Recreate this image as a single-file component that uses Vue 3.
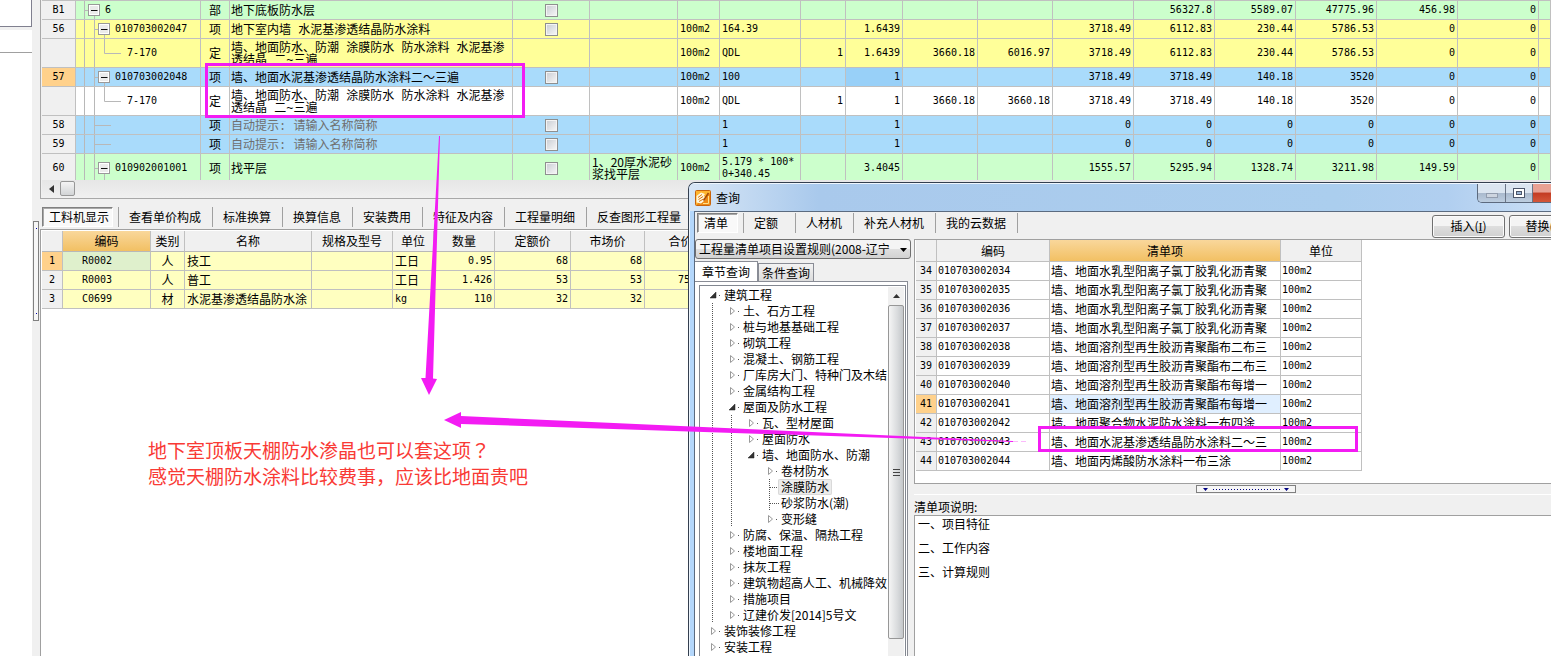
<script setup>
import { ref } from 'vue'

const cols = [34, 125, 29, 283, 77, 88, 42, 81, 45, 57, 75, 75, 81, 81, 81, 81, 81, 81]

const longName = '墙、地面防水、防潮 涂膜防水 防水涂料 水泥基渗透结晶 二~三遍'
const rows = [
  { no: 'B1', tone: 'green', kind: 'root', h: 18, code: '6', type: '部', name: '地下底板防水层', check: true, nums: ['', '', '', '', '', '56327.8', '5589.07', '47775.96', '456.98', '0'] },
  { no: '56', tone: 'yellow', kind: 'branch', h: 18, code: '010703002047', type: '项', name: '地下室内墙 水泥基渗透结晶防水涂料', check: true, unit: '100m2', expr: '164.39', nums: ['', '1.6439', '', '', '3718.49', '6112.83', '230.44', '5786.53', '0', '0'] },
  { no: '', tone: 'yellow', kind: 'leaf', h: 28, code: '7-170', type: '定', name: longName, unit: '100m2', expr: 'QDL', nums: ['1', '1.6439', '3660.18', '6016.97', '3718.49', '6112.83', '230.44', '5786.53', '0', '0'] },
  { no: '57', tone: 'blue', kind: 'branch', h: 18, current: true, code: '010703002048', type: '项', name: '墙、地面水泥基渗透结晶防水涂料二～三遍', check: true, unit: '100m2', expr: '100', nums: ['', '1', '', '', '3718.49', '3718.49', '140.18', '3520', '0', '0'] },
  { no: '', tone: 'white', kind: 'leaf', h: 28, code: '7-170', type: '定', name: longName, unit: '100m2', expr: 'QDL', nums: ['1', '1', '3660.18', '3660.18', '3718.49', '3718.49', '140.18', '3520', '0', '0'] },
  { no: '58', tone: 'blue', kind: 'hint', h: 18, code: '', type: '项', name: '自动提示: 请输入名称简称', check: true, expr: '1', nums: ['', '1', '', '', '0', '0', '0', '0', '0', '0'] },
  { no: '59', tone: 'blue', kind: 'hint', h: 18, code: '', type: '项', name: '自动提示: 请输入名称简称', check: true, expr: '1', nums: ['', '1', '', '', '0', '0', '0', '0', '0', '0'] },
  { no: '60', tone: 'green', kind: 'branch', h: 28, code: '010902001001', type: '项', name: '找平层', check: true, feature: '1、20厚水泥砂浆找平层', unit: '100m2', expr: '5.179 * 100*0+340.45', nums: ['', '3.4045', '', '', '1555.57', '5295.94', '1328.74', '3211.98', '149.59', '0'] }
]
const gutter = { root: 24, branch: 34, leaf: 46, hint: 36 }

const detailTabs = ['查看单价构成', '标准换算', '换算信息', '安装费用', '特征及内容', '工程量明细', '反查图形工程量']
const detailCols = [21, 88, 34, 127, 81, 41, 61, 76, 74, 72]
const detailHeads = ['编码', '类别', '名称', '规格及型号', '单位', '数量', '定额价', '市场价', '合价']
const detail = [
  ['R0002', '人', '技工', '工日', '0.95', '68', '68', '64.6'],
  ['R0003', '人', '普工', '工日', '1.426', '53', '53', '75.578'],
  ['C0699', '材', '水泥基渗透结晶防水涂', 'kg', '110', '32', '32', '3520']
]

const queryTabs = ['定额', '人材机', '补充人材机', '我的云数据']
const rule = ref('2008')

// d: depth, s: o(pen) / c(losed) / l(eaf)
const tree = [
  { t: '建筑工程', d: 0, s: 'o' },
  { t: '土、石方工程', d: 1, s: 'c' },
  { t: '桩与地基基础工程', d: 1, s: 'c' },
  { t: '砌筑工程', d: 1, s: 'c' },
  { t: '混凝土、钢筋工程', d: 1, s: 'c' },
  { t: '厂库房大门、特种门及木结', d: 1, s: 'c' },
  { t: '金属结构工程', d: 1, s: 'c' },
  { t: '屋面及防水工程', d: 1, s: 'o' },
  { t: '瓦、型材屋面', d: 2, s: 'c' },
  { t: '屋面防水', d: 2, s: 'c' },
  { t: '墙、地面防水、防潮', d: 2, s: 'o' },
  { t: '卷材防水', d: 3, s: 'c' },
  { t: '涂膜防水', d: 3, s: 'l', on: true },
  { t: '砂浆防水(潮)', d: 3, s: 'l' },
  { t: '变形缝', d: 3, s: 'c' },
  { t: '防腐、保温、隔热工程', d: 1, s: 'c' },
  { t: '楼地面工程', d: 1, s: 'c' },
  { t: '抹灰工程', d: 1, s: 'c' },
  { t: '建筑物超高人工、机械降效', d: 1, s: 'c' },
  { t: '措施项目', d: 1, s: 'c' },
  { t: '辽建价发[2014]5号文', d: 1, s: 'c' },
  { t: '装饰装修工程', d: 0, s: 'c' },
  { t: '安装工程', d: 0, s: 'c' }
]

const listNames = [
  '墙、地面水乳型阳离子氯丁胶乳化沥青聚',
  '墙、地面水乳型阳离子氯丁胶乳化沥青聚',
  '墙、地面水乳型阳离子氯丁胶乳化沥青聚',
  '墙、地面水乳型阳离子氯丁胶乳化沥青聚',
  '墙、地面溶剂型再生胶沥青聚酯布二布三',
  '墙、地面溶剂型再生胶沥青聚酯布二布三',
  '墙、地面溶剂型再生胶沥青聚酯布每增一',
  '墙、地面溶剂型再生胶沥青聚酯布每增一',
  '墙、地面聚合物水泥防水涂料一布四涂',
  '墙、地面水泥基渗透结晶防水涂料二～三',
  '墙、地面丙烯酸防水涂料一布三涂'
]
const list = listNames.map((name, i) => ({ no: 34 + i, code: '0107030020' + (34 + i), name }))
</script>

<template>
  <div class="app">
    <aside class="side">
      <div class="side-box"></div>
      <div class="side-gap"></div>
      <div class="side-head"></div>
      <div class="side-body"></div>
    </aside>
    <div class="split-col"><div class="v-grip"><i></i><i></i></div></div>

    <main class="main">
      <section class="upper">
        <div class="grid-clip">
          <table class="grid budget">
            <colgroup>
              <col v-for="(w, i) in cols" :key="i" :style="{ width: w + 'px' }" />
              <col />
            </colgroup>
            <tbody>
              <tr v-for="(r, i) in rows" :key="i" :class="[r.tone, { tall: r.h > 18 }]">
                <th scope="row" class="num" :class="{ current: r.current }">{{ r.no }}</th>
                <td>
                  <div class="node">
                    <svg :width="gutter[r.kind]" :height="r.h" fill="none" stroke="#b8b8b8">
                      <path :d="`M8.5 0V${r.h}`" />
                      <path v-if="r.kind !== 'root'" :d="`M18.5 0V${r.h}`" />
                      <path v-if="r.kind === 'leaf'" :d="`M28.5 0V${r.h / 2 + 0.5}H45`" />
                      <path v-if="r.kind === 'hint'" :d="`M18 ${r.h / 2 + 0.5}H35`" />
                      <g v-if="r.kind === 'root' || r.kind === 'branch'" :transform="`translate(${r.kind === 'root' ? 12 : 22} ${r.h / 2 - 6})`">
                        <path :d="`M-4 6.5H0M6.5 12V${r.h}`" />
                        <rect x=".5" y=".5" width="11" height="11" fill="#fff" stroke="#999" />
                        <rect x="2" y="2" width="8" height="8" fill="#ebebeb" stroke="none" />
                        <path d="M3 6.5H9.500" stroke="#111" />
                      </g>
                    </svg>
                    <span class="num">{{ r.code }}</span>
                  </div>
                </td>
                <td class="mid">{{ r.type }}</td>
                <td class="name" :class="{ hint: r.kind === 'hint' }">{{ r.name }}</td>
                <td class="mid"><input v-if="r.check" type="checkbox" class="tick" :aria-label="'选择 ' + r.no" /></td>
                <td class="feature">{{ r.feature }}</td>
                <td class="num">{{ r.unit }}</td>
                <td class="num expr">{{ r.expr }}</td>
                <td v-for="(n, k) in r.nums" :key="k" class="num right" :class="{ picked: r.current && k === 1 }">{{ n }}</td>
                <td></td>
              </tr>
            </tbody>
          </table>
        </div>
        <div class="h-scroll">
          <button type="button" class="arrow" aria-label="向左滚动"><svg width="5" height="8"><path d="M5 0V8L0 4Z" fill="#333" /></svg></button>
          <div class="h-thumb"></div>
        </div>
      </section>

      <nav class="tabs detail-tabs">
        <button type="button" class="tab active">工料机显示</button>
        <button v-for="t in detailTabs" :key="t" type="button" class="tab">{{ t }}</button>
      </nav>

      <section class="lower">
        <table class="grid detail">
          <colgroup><col v-for="(w, i) in detailCols" :key="i" :style="{ width: w + 'px' }" /></colgroup>
          <thead>
            <tr><th></th><th v-for="(h, i) in detailHeads" :key="h" scope="col" :class="{ gold: i === 0 }">{{ h }}</th></tr>
          </thead>
          <tbody>
            <tr v-for="(r, i) in detail" :key="i">
              <th scope="row" class="num" :class="{ current: i === 0 }">{{ i + 1 }}</th>
              <td class="num code" :class="{ mint: i === 0 }">{{ r[0] }}</td>
              <td class="mid">{{ r[1] }}</td>
              <td>{{ r[2] }}</td>
              <td></td>
              <td :class="{ num: i === 2 }">{{ r[3] }}</td>
              <td v-for="k in 4" :key="k" class="num right">{{ r[k + 3] }}</td>
            </tr>
          </tbody>
        </table>
      </section>
    </main>

    <section class="dialog" role="dialog" aria-labelledby="dlg-title">
      <header class="title-bar">
        <svg class="logo" width="16" height="16" viewBox="0 0 16 16">
          <rect x=".5" y=".5" width="15" height="15" rx="1" fill="#ffb52e" stroke="#c8640c" />
          <path d="M1 15L15 3V15Z" fill="#ee8a14" />
          <path d="M1.500 6L6 2.500 10 4 8.500 6 11 7.500 9 11 6 13.500 1.500 12.500Z" fill="#fff6dc" />
          <path d="M3 7.500L7 4.500M3.500 9.500L8 6.500M4 11.500L8.500 9" stroke="#d8760f" fill="none" />
          <path d="M8.500 10.500L13.500 3" stroke="#a34a08" stroke-width="1.500" />
          <path d="M8 13.500H13.500V6" stroke="#ffe08a" fill="none" />
        </svg>
        <h1 id="dlg-title">查询</h1>
        <div class="win-btns">
          <button type="button" class="min" aria-label="最小化"><svg width="12" height="5"><rect x=".5" y=".5" width="11" height="4" fill="#cdd5e0" stroke="#929dae" /></svg></button>
          <button type="button" class="max" aria-label="最大化"><svg width="12" height="10"><rect x=".5" y=".5" width="11" height="9" fill="#fff" stroke="#4c566a" /><rect x="3.500" y="3.500" width="5" height="3" fill="#9cb6d6" stroke="#4c566a" /></svg></button>
          <button type="button" class="close" aria-label="关闭"></button>
        </div>
      </header>

      <div class="client">
        <div class="toolbar">
          <nav class="tabs query-tabs">
            <button type="button" class="tab active">清单</button>
            <button v-for="t in queryTabs" :key="t" type="button" class="tab">{{ t }}</button>
            <span class="tab-end"></span>
          </nav>
          <div class="actions">
            <button type="button" class="push">插入(<u>I</u>)</button>
            <button type="button" class="push">替换(<u>R</u>)</button>
          </div>
        </div>

        <div class="panes">
          <div class="left-pane">
            <div class="combo">
              <select v-model="rule" aria-label="清单规则"><option value="2008">工程量清单项目设置规则(2008-辽宁</option></select>
              <svg width="7" height="4"><path d="M0 0H7L3.500 4Z" fill="#000" /></svg>
            </div>
            <div class="page-tabs">
              <button type="button" class="ptab on">章节查询</button>
              <button type="button" class="ptab">条件查询</button>
            </div>
            <div class="page">
              <div class="tree-box">
                <ul class="tree">
                  <li v-for="(n, i) in tree" :key="i">
                    <svg :width="24 + 19 * n.d" height="16" fill="none" stroke="#555">
                      <g stroke-dasharray="1 1">
                        <path v-if="n.d > 0" d="M12.500 0V16" />
                        <path v-if="n.d > 1" d="M31.500 0V16" />
                        <path v-if="n.s === 'l'" d="M69.500 0V16M70 8.500H79" />
                      </g>
                      <g v-if="n.s !== 'l'" :transform="`translate(${10 + 19 * n.d} 0)`">
                        <rect x="-1" y="3" width="9" height="10" fill="#fff" stroke="none" />
                        <path v-if="n.s === 'c'" d="M1.500 4.500V11.500L5.500 8Z" stroke="#9a9a9a" />
                        <path v-else d="M6 5V11H0Z" fill="#333" stroke="#222" stroke-width=".5" />
                        <path d="M9 8.500H10" />
                      </g>
                    </svg>
                    <span :class="{ on: n.on }">{{ n.t }}</span>
                  </li>
                </ul>
                <div class="v-scroll">
                  <button type="button" class="v-arrow" aria-label="向上滚动"><svg width="7" height="4"><path d="M0 4H7L3.500 0Z" fill="#333" /></svg></button>
                  <div class="v-thumb"><i></i><i></i><i></i></div>
                </div>
              </div>
            </div>
          </div>

          <div class="right-pane">
            <div class="list-area">
              <table class="grid items">
                <colgroup><col class="w-no" /><col class="w-code" /><col class="w-name" /><col class="w-unit" /></colgroup>
                <thead>
                  <tr><th></th><th scope="col">编码</th><th scope="col" class="gold">清单项</th><th scope="col">单位</th></tr>
                </thead>
                <tbody>
                  <tr v-for="r in list" :key="r.no">
                    <th scope="row" class="num" :class="{ current: r.no === 41 }">{{ r.no }}</th>
                    <td class="num">{{ r.code }}</td>
                    <td :class="{ sel: r.no === 41 }">{{ r.name }}</td>
                    <td class="num">100m2</td>
                  </tr>
                </tbody>
              </table>
            </div>
            <div class="h-split">
              <svg width="100" height="8" fill="none">
                <rect x=".5" y=".5" width="99" height="7" fill="#f6f6f6" stroke="#808080" />
                <path d="M7 3H12L9.500 6ZM88 3H93L90.500 6Z" fill="#000080" />
                <path d="M17 4.500H84" stroke="#000080" stroke-dasharray="1 2" />
              </svg>
            </div>
            <h2 class="note-head">清单项说明:</h2>
            <div class="notes">
              <p>一、项目特征</p>
              <p>二、工作内容</p>
              <p>三、计算规则</p>
            </div>
          </div>
        </div>
      </div>
    </section>

    <div class="remark">
      <p>地下室顶板天棚防水渗晶也可以套这项<span class="ask">？</span></p>
      <p>感觉天棚防水涂料比较费事，应该比地面贵吧</p>
    </div>
    <svg class="marks" fill="none" stroke="#f31cf3">
      <rect x="206.500" y="64.500" width="317" height="52" stroke-width="3" />
      <rect x="1039.500" y="427.500" width="317" height="23" stroke-width="3" />
      <g fill="#f31cf3" stroke="none">
        <path d="M439 136L440 136 433 378.500 437 379 429 395 421 378 425.500 378Z" />
        <path d="M1013 441L1013 442 461 424 461 428 444 420 461 412 461 416Z" />
      </g>
      <path d="M1013 441.500H1029" stroke-dasharray="5 3" opacity=".3" />
    </svg>
  </div>
</template>

<style>
body { margin: 0; }
</style>

<style scoped>
.app {
  position: relative;
  display: flex;
  height: 100vh;
  overflow: hidden;
  background: #fff;
  color: #000;
  font: 12px/16px "Noto Sans CJK SC", sans-serif;
}
button, select, input { font: inherit; color: inherit; margin: 0; }
button { padding: 0; border: 0; background: none; }
p, h1, h2, ul { margin: 0; padding: 0; font-size: 12px; font-weight: normal; }
svg { display: block; flex: none; }

.side { width: 32px; flex: none; display: flex; flex-direction: column; }
.side-box { height: 26px; border: solid #80808f; border-width: 0 1px 1px 0; }
.side-gap { height: 3px; background: #f0f0f0; }
.side-head { height: 22px; border-bottom: 1px solid #a0a0a0; }
.side-body { flex: 1; }
.split-col { width: 8px; flex: none; background: #f0f0f0; }
.v-grip {
  box-sizing: border-box; width: 6px; height: 100px; margin: 221px 0 0 1px; padding: 6px 0;
  border: 1px solid #808080; background: #f6f6f6;
  display: flex; flex-direction: column; justify-content: space-between; align-items: center;
}
.v-grip i { width: 1px; height: 1px; background: #00a; }

.main { flex: 1; min-width: 0; display: flex; flex-direction: column; background: #f0f0f0; }
.upper { border: solid #a8a8a8; border-width: 0 0 1px 1px; padding-left: 1px; }
.grid-clip { height: 180px; overflow: hidden; }

.grid { border-collapse: separate; border-spacing: 0; table-layout: fixed; width: 1px; }
.grid th, .grid td {
  box-sizing: border-box; height: 19px; padding: 0 2px;
  border: solid #c0c0c0; border-width: 0 1px 1px 0;
  line-height: 12px; font-weight: normal; text-align: left; white-space: nowrap;
}
.grid th { padding: 0; background: #f0f0f0; text-align: center; }
.grid .num, .num { font-family: "DejaVu Sans Mono", monospace; font-size: 10px; }
.grid .current { background: #ffd18b; }
.grid .mid { padding: 0; text-align: center; }
.grid .right { text-align: right; }
.grid thead th { height: 21px; line-height: 16px; }
.grid .gold { background: linear-gradient(#f9d79b, #f2c063); }

.budget { width: 100%; border-top: 1px solid #c0c0c0; }
.budget .tall th, .budget .tall td { height: 29px; }
.budget td:nth-child(2) { padding: 0; }
.green { background: #ccffcc; }
.yellow { background: #ffff99; }
.blue { background: #a9dbfb; }
.white { background: #fff; }
.picked { background: #98d0f8; }
.node { display: flex; align-items: center; gap: 5px; }
.grid .name { padding: 3px 2px 0 1px; font-family: "Liberation Mono", "Noto Sans CJK SC", monospace; white-space: normal; }
.grid .hint { color: #6f6f6f; }
.grid .feature, .grid .expr { white-space: normal; word-break: break-all; }
.tick {
  appearance: none; display: block; width: 13px; height: 13px; margin: 0 auto;
  border: 1px solid #8e8f8f; background: linear-gradient(135deg, #c8ccd2, #f8f8f8);
  box-shadow: inset 0 0 0 1px #f4f4f4;
}

.h-scroll { display: flex; height: 18px; background: linear-gradient(#e6e6e6, #f0f0f0); }
.arrow { width: 18px; display: flex; align-items: center; justify-content: center; }
.h-thumb { box-sizing: border-box; width: 15px; height: 15px; margin-top: 1px; border: 1px solid #979797; border-radius: 2px; background: linear-gradient(#f4f4f4, #d2d4d6); }

.tabs { display: flex; }
.tab { flex: none; height: 20px; padding: 0 11px 0 10px; border-left: 1px solid #a0a0a0; text-align: left; white-space: nowrap; }
.tab.active { border: 1px solid #fff; border-top-color: #808080; border-left-color: #808080; background: #f9f9f9; box-shadow: inset 1px 1px #a8a8a8; margin-right: 5px; }
.detail-tabs { padding: 8px 0 2px 2px; overflow: hidden; }
.detail-tabs .active { padding: 0 3px 0 6px; }

.lower { flex: 1; min-height: 0; border: solid #a0a0a0; border-width: 1px 0 0 1px; padding: 1px 0 0 1px; background: #fff; overflow: hidden; }
.detail td { background: #ffffc0; }
.detail thead th { border-bottom-color: #b8b8b8; }
.detail .code { padding-left: 19px; }
.detail .mint { background: #dff0cc; }

.dialog {
  position: absolute; left: 688px; top: 182px; right: 0; bottom: 0;
  display: flex; flex-direction: column;
  border: solid #343f4f; border-width: 1px 0 0 1px; border-radius: 7px 0 0 0;
  background: #b4d7fb; box-shadow: inset 1px 1px #eef6fe;
  overflow: hidden;
}
.title-bar {
  display: flex; align-items: center; height: 28px; padding-left: 6px;
  background: linear-gradient(90deg, #d7e6f6, #a9c9ec 15%, #abceee 75%, #b1cff0 88%, #cadff5);
  border-top: 1px solid #eef6fe; box-sizing: border-box;
}
.title-bar h1 { margin-left: 5px; flex: 1; }
.win-btns { display: flex; align-self: flex-start; border: solid #5c6a7e; border-width: 0 0 1px 1px; border-radius: 0 0 0 5px; overflow: hidden; }
.win-btns button { height: 18px; display: flex; align-items: center; justify-content: center; border-right: 1px solid #6b7688; background: linear-gradient(#dbe5f0 50%, #a9b9cd 50%, #bdcee0); }
.win-btns .min { width: 28px; padding-top: 4px; }
.win-btns .max { width: 27px; }
.win-btns .close { width: 18px; border: 0; background: linear-gradient(#e8a193 45%, #c33b22 50%, #d4573a); }

.client { flex: 1; min-height: 0; margin-left: 5px; display: flex; flex-direction: column; border: solid #5b6b80; border-width: 1px 0 0 1px; background: #f0f0f0; }
.toolbar { display: flex; justify-content: space-between; height: 27px; }
.query-tabs { padding: 1px 0 0 2px; }
.query-tabs .tab { min-width: 52px; }
.query-tabs .active { min-width: 0; padding: 0 9px 0 6px; }
.tab-end { width: 1px; height: 20px; background: #a0a0a0; }
.actions { display: flex; gap: 4px; margin-right: -31px; padding-top: 3px; }
.push { box-sizing: border-box; width: 73px; height: 23px; border: 1px solid #707070; border-radius: 3px; background: linear-gradient(#f4f4f4 50%, #dedede 50%, #d0d0d0); box-shadow: inset 0 0 0 1px #fbfbfb; }
.push u { font-family: "Liberation Serif", serif; }

.panes { flex: 1; min-height: 0; display: flex; }
.left-pane { width: 213px; flex: none; display: flex; flex-direction: column; margin-right: 6px; }
.combo { position: relative; width: 216px; height: 20px; }
.combo select { appearance: none; box-sizing: border-box; width: 100%; height: 20px; padding: 0 14px 0 3px; border: 1px solid #707070; border-radius: 3px; background: linear-gradient(#f4f4f4 50%, #e0e0e0 50%, #d2d2d2); }
.combo svg { position: absolute; right: 4px; top: 9px; pointer-events: none; }
.page-tabs { display: flex; align-items: flex-end; padding-top: 2px; height: 20px; }
.ptab { box-sizing: border-box; height: 18px; padding: 0 3px; border: 1px solid #898c95; border-bottom: 0; background: linear-gradient(#f3f3f3, #dcdcdc); }
.ptab.on { height: 20px; padding: 0 7px; border-left: 0; background: #fff; }
.page { flex: 1; min-height: 0; padding: 3px 1px 0 4px; border: solid #898c95; border-width: 1px 1px 0 0; background: #fff; display: flex; }
.tree-box { flex: 1; min-width: 0; display: flex; border: solid #828790; border-width: 1px 1px 0 1px; padding: 1px 1px 0 0; }
.tree { flex: 1; min-width: 0; list-style: none; overflow: hidden; }
.tree li { display: flex; height: 16px; align-items: center; white-space: nowrap; }
.tree .on { margin: 0 -3px; padding: 0 3px; border-radius: 2px; background: #ececec; box-shadow: inset 0 0 0 1px #d9d9d9; }
.v-scroll { width: 16px; flex: none; background: #f0f0f0; }
.v-arrow { display: flex; width: 16px; height: 18px; align-items: center; justify-content: center; }
.v-thumb { box-sizing: border-box; height: 334px; border: 1px solid #979797; border-radius: 2px; background: linear-gradient(90deg, #f5f5f5, #d9dbdd 60%, #c4c7ca); display: flex; flex-direction: column; gap: 2px; align-items: center; justify-content: center; }
.v-thumb i { width: 7px; height: 1px; background: #444; }

.right-pane { flex: 1; min-width: 0; display: flex; flex-direction: column; }
.list-area { height: 243px; border: solid #a0a0a0; border-width: 1px 0 1px 1px; padding-left: 1px; background: #fff; }
.w-no { width: 21px; }
.w-code { width: 113px; }
.w-name { width: 231px; }
.w-unit { width: 81px; }
.items thead th { height: 22px; }
.items td { padding-left: 1px; }
.items .sel { background: #e0efff; }
.h-split { display: flex; justify-content: center; height: 9px; padding: 1px 0 0 26px; border-bottom: 1px solid #fff; }
.note-head { height: 16px; padding-top: 4px; }
.notes { flex: 1; min-height: 0; border: solid #a0a0a0; border-width: 1px 0 0 1px; padding: 0 3px; background: #fff; }
.notes p { padding-bottom: 8px; }

.remark { position: absolute; left: 148px; top: 437px; color: #f93a35; pointer-events: none; }
.remark p { font-size: 19px; line-height: 26px; white-space: nowrap; }
.remark .ask { font-family: "Noto Sans CJK TC", sans-serif; }
.marks { position: absolute; left: 0; top: 0; width: 100%; height: 100%; pointer-events: none; }
</style>
